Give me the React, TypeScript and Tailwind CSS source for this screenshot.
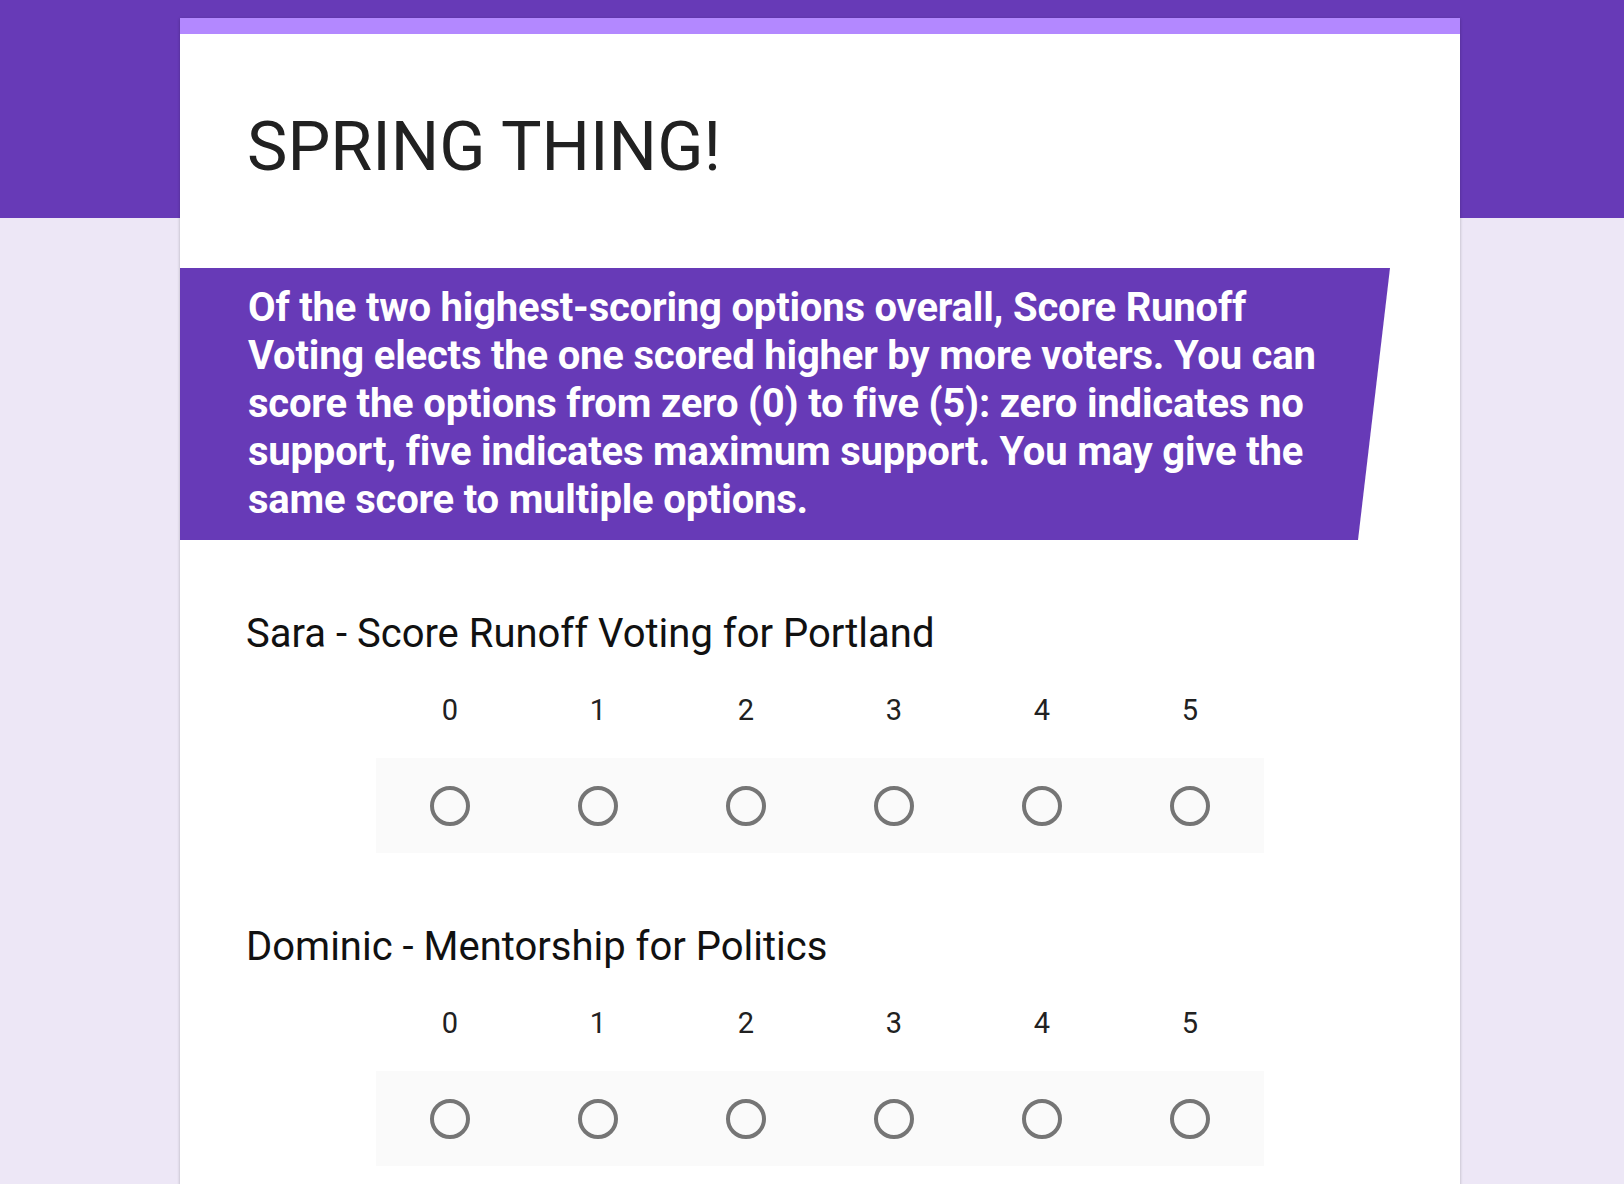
import React from 'react';

const scores = [0, 1, 2, 3, 4, 5];

const questions = [
  'Sara - Score Runoff Voting for Portland',
  'Dominic - Mentorship for Politics',
];

const ScoreQuestion = ({ title }: { title: string }) => {
  return (
    <div className="pt-[70px]">
      <div className="px-[66px] text-[40px] leading-[48px] text-[#111111]">{title}</div>

      {/* Scale labels */}
      <div className="ml-[196px] mt-[34px] grid w-[888px] grid-cols-6">
        {scores.map((s) => (
          <div key={s} className="text-center text-[29px] leading-[36px] text-[#212121]">
            {s}
          </div>
        ))}
      </div>

      {/* Radio row */}
      <div className="ml-[196px] mt-[30px] grid h-[95px] w-[888px] grid-cols-6 bg-[#fafafa]">
        {scores.map((s) => (
          <div key={s} className="flex items-center justify-center">
            <div className="h-[40px] w-[40px] rounded-full border-[4px] border-[#757575]" />
          </div>
        ))}
      </div>
    </div>
  );
};

export default function App() {
  return (
    <div className="min-h-screen bg-[linear-gradient(#673ab7_0_218px,#ede7f6_218px)] pt-[18px] font-['Roboto',sans-serif]">
      <div className="ml-[180px] w-[1280px] min-h-[1300px] border-t-[16px] border-[#b388ff] bg-white shadow-[0_1px_3px_rgba(0,0,0,0.25)]">
        <div className="px-[67px] pt-[73px] text-[68px] leading-[80px] text-[#212121]">SPRING THING!</div>

        {/* Description banner */}
        <div className="mt-[81px] bg-[#673ab7] py-[16px] pl-[68px] pr-[120px] [clip-path:polygon(0_0,1210px_0,1178px_100%,0_100%)]">
          <p className="text-[40px] font-bold leading-[48px] tracking-[-0.2px] text-white">
            Of the two highest-scoring options overall, Score Runoff Voting elects the one scored higher by more
            voters. You can score the options from zero (0) to five (5): zero indicates no support, five indicates
            maximum support. You may give the same score to multiple options.
          </p>
        </div>

        {questions.map((q) => (
          <ScoreQuestion key={q} title={q} />
        ))}
      </div>
    </div>
  );
}
